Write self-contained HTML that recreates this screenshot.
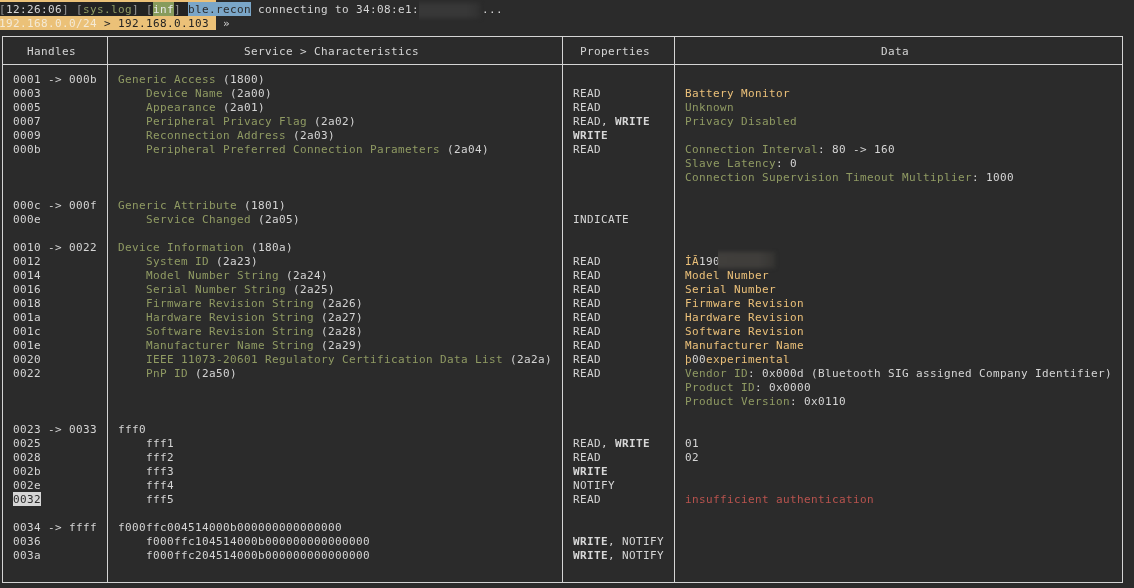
<!DOCTYPE html>
<html lang="en"><head><meta charset="utf-8"><title>bettercap ble.enum</title>
<style>
html,body{margin:0;padding:0;background:#2b2b2b;}
body{width:1134px;height:588px;overflow:hidden;position:relative;font-family:"DejaVu Sans Mono","Liberation Mono",monospace;font-size:11px;line-height:14px;color:#d5d5d5;}
span{position:absolute;white-space:pre;height:13px;padding-top:1px;display:block;letter-spacing:0.3774px;}
#t{position:absolute;left:0;top:0;width:1134px;height:588px;will-change:transform;}
i{position:absolute;display:block;background:#d4d4d4;}
.g{color:#909b63}
.y{color:#ebc079}
.b{font-weight:bold;color:#d8d8d8}
.r{color:#b9534e}
.d{color:#989898}
.sel{background:#d6d6d6;color:#2b2b2b}
.inf{background:#879b5c;color:#e8e8e8}
.mod{background:#7aa6c8;color:#2b2b2b}
.pw{background:#ebc178;color:#f4ead6}
.pk{background:#ebc178;color:#222}
.bw{position:absolute;overflow:hidden}
.bw b{position:absolute;display:block;filter:blur(2px)}
.dk{position:absolute;background:#232323}
</style></head>
<body>
<div class="dk" style="left:0;top:2px;width:188px;height:14px"></div><div style="position:absolute;left:0;top:0;width:216px;height:2px;background:#ebc178"></div><i style="left:2px;top:36px;width:1px;height:547px"></i><i style="left:107px;top:36px;width:1px;height:547px"></i><i style="left:562px;top:36px;width:1px;height:547px"></i><i style="left:674px;top:36px;width:1px;height:547px"></i><i style="left:1122px;top:36px;width:1px;height:547px"></i><i style="left:2px;top:36px;width:1121px;height:1px"></i><i style="left:2px;top:64px;width:1121px;height:1px"></i><i style="left:2px;top:582px;width:1121px;height:1px"></i><div class="bw" style="left:419px;top:0;width:70px;height:24px"><b style="left:-6px;top:3px;width:67px;height:15px;background:linear-gradient(90deg,#383838 0,#383838 80%,#313131 100%)"></b></div>
<div id="t">
<span class="d" style="left:-1px;top:2px">[</span>
<span style="left:6px;top:2px">12:26:06</span>
<span class="d" style="left:62px;top:2px">]</span>
<span class="d" style="left:76px;top:2px">[</span>
<span class="g" style="left:83px;top:2px">sys.log</span>
<span class="d" style="left:132px;top:2px">]</span>
<span class="d" style="left:146px;top:2px">[</span>
<span class="inf" style="left:153px;top:2px">inf</span>
<span class="d" style="left:174px;top:2px">]</span>
<span class="mod" style="left:188px;top:2px">ble.recon</span>
<span style="left:258px;top:2px">connecting to 34:08:e1:</span>
<span style="left:482px;top:2px">...</span>
<span class="pw" style="left:-1px;top:16px">192.168.0.0/24</span>
<span class="pk" style="left:97px;top:16px"> &gt; 192.168.0.103 </span>
<span style="left:223px;top:16px">» </span>
<span style="left:27px;top:44px">Handles</span>
<span style="left:244px;top:44px">Service &gt; Characteristics</span>
<span style="left:580px;top:44px">Properties</span>
<span style="left:881px;top:44px">Data</span>
<span style="left:13px;top:72px">0001 -&gt; 000b</span>
<span class="g" style="left:118px;top:72px">Generic Access</span>
<span style="left:223px;top:72px">(1800)</span>
<span style="left:13px;top:86px">0003</span>
<span class="g" style="left:146px;top:86px">Device Name</span>
<span style="left:230px;top:86px">(2a00)</span>
<span style="left:573px;top:86px">READ</span>
<span class="y" style="left:685px;top:86px">Battery Monitor</span>
<span style="left:13px;top:100px">0005</span>
<span class="g" style="left:146px;top:100px">Appearance</span>
<span style="left:223px;top:100px">(2a01)</span>
<span style="left:573px;top:100px">READ</span>
<span class="g" style="left:685px;top:100px">Unknown</span>
<span style="left:13px;top:114px">0007</span>
<span class="g" style="left:146px;top:114px">Peripheral Privacy Flag</span>
<span style="left:314px;top:114px">(2a02)</span>
<span style="left:573px;top:114px">READ, </span>
<span class="b" style="left:615px;top:114px">WRITE</span>
<span class="g" style="left:685px;top:114px">Privacy Disabled</span>
<span style="left:13px;top:128px">0009</span>
<span class="g" style="left:146px;top:128px">Reconnection Address</span>
<span style="left:293px;top:128px">(2a03)</span>
<span class="b" style="left:573px;top:128px">WRITE</span>
<span style="left:13px;top:142px">000b</span>
<span class="g" style="left:146px;top:142px">Peripheral Preferred Connection Parameters</span>
<span style="left:447px;top:142px">(2a04)</span>
<span style="left:573px;top:142px">READ</span>
<span class="g" style="left:685px;top:142px">Connection Interval</span>
<span style="left:818px;top:142px">: 80 -&gt; 160</span>
<span class="g" style="left:685px;top:156px">Slave Latency</span>
<span style="left:776px;top:156px">: 0</span>
<span class="g" style="left:685px;top:170px">Connection Supervision Timeout Multiplier</span>
<span style="left:972px;top:170px">: 1000</span>
<span style="left:13px;top:198px">000c -&gt; 000f</span>
<span class="g" style="left:118px;top:198px">Generic Attribute</span>
<span style="left:244px;top:198px">(1801)</span>
<span style="left:13px;top:212px">000e</span>
<span class="g" style="left:146px;top:212px">Service Changed</span>
<span style="left:258px;top:212px">(2a05)</span>
<span style="left:573px;top:212px">INDICATE</span>
<span style="left:13px;top:240px">0010 -&gt; 0022</span>
<span class="g" style="left:118px;top:240px">Device Information</span>
<span style="left:251px;top:240px">(180a)</span>
<span style="left:13px;top:254px">0012</span>
<span class="g" style="left:146px;top:254px">System ID</span>
<span style="left:216px;top:254px">(2a23)</span>
<span style="left:573px;top:254px">READ</span>
<span class="y" style="left:685px;top:254px">İĀ</span>
<span style="left:699px;top:254px">190</span>
<span style="left:13px;top:268px">0014</span>
<span class="g" style="left:146px;top:268px">Model Number String</span>
<span style="left:286px;top:268px">(2a24)</span>
<span style="left:573px;top:268px">READ</span>
<span class="y" style="left:685px;top:268px">Model Number</span>
<span style="left:13px;top:282px">0016</span>
<span class="g" style="left:146px;top:282px">Serial Number String</span>
<span style="left:293px;top:282px">(2a25)</span>
<span style="left:573px;top:282px">READ</span>
<span class="y" style="left:685px;top:282px">Serial Number</span>
<span style="left:13px;top:296px">0018</span>
<span class="g" style="left:146px;top:296px">Firmware Revision String</span>
<span style="left:321px;top:296px">(2a26)</span>
<span style="left:573px;top:296px">READ</span>
<span class="y" style="left:685px;top:296px">Firmware Revision</span>
<span style="left:13px;top:310px">001a</span>
<span class="g" style="left:146px;top:310px">Hardware Revision String</span>
<span style="left:321px;top:310px">(2a27)</span>
<span style="left:573px;top:310px">READ</span>
<span class="y" style="left:685px;top:310px">Hardware Revision</span>
<span style="left:13px;top:324px">001c</span>
<span class="g" style="left:146px;top:324px">Software Revision String</span>
<span style="left:321px;top:324px">(2a28)</span>
<span style="left:573px;top:324px">READ</span>
<span class="y" style="left:685px;top:324px">Software Revision</span>
<span style="left:13px;top:338px">001e</span>
<span class="g" style="left:146px;top:338px">Manufacturer Name String</span>
<span style="left:321px;top:338px">(2a29)</span>
<span style="left:573px;top:338px">READ</span>
<span class="y" style="left:685px;top:338px">Manufacturer Name</span>
<span style="left:13px;top:352px">0020</span>
<span class="g" style="left:146px;top:352px">IEEE 11073-20601 Regulatory Certification Data List</span>
<span style="left:510px;top:352px">(2a2a)</span>
<span style="left:573px;top:352px">READ</span>
<span class="y" style="left:685px;top:352px">þ</span>
<span style="left:692px;top:352px">00</span>
<span class="y" style="left:706px;top:352px">experimental</span>
<span style="left:13px;top:366px">0022</span>
<span class="g" style="left:146px;top:366px">PnP ID</span>
<span style="left:195px;top:366px">(2a50)</span>
<span style="left:573px;top:366px">READ</span>
<span class="g" style="left:685px;top:366px">Vendor ID</span>
<span style="left:748px;top:366px">: 0x000d (Bluetooth SIG assigned Company Identifier)</span>
<span class="g" style="left:685px;top:380px">Product ID</span>
<span style="left:755px;top:380px">: 0x0000</span>
<span class="g" style="left:685px;top:394px">Product Version</span>
<span style="left:790px;top:394px">: 0x0110</span>
<span style="left:13px;top:422px">0023 -&gt; 0033</span>
<span style="left:118px;top:422px">fff0</span>
<span style="left:13px;top:436px">0025</span>
<span style="left:146px;top:436px">fff1</span>
<span style="left:573px;top:436px">READ, </span>
<span class="b" style="left:615px;top:436px">WRITE</span>
<span style="left:685px;top:436px">01</span>
<span style="left:13px;top:450px">0028</span>
<span style="left:146px;top:450px">fff2</span>
<span style="left:573px;top:450px">READ</span>
<span style="left:685px;top:450px">02</span>
<span style="left:13px;top:464px">002b</span>
<span style="left:146px;top:464px">fff3</span>
<span class="b" style="left:573px;top:464px">WRITE</span>
<span style="left:13px;top:478px">002e</span>
<span style="left:146px;top:478px">fff4</span>
<span style="left:573px;top:478px">NOTIFY</span>
<span class="sel" style="left:13px;top:492px">0032</span>
<span style="left:146px;top:492px">fff5</span>
<span style="left:573px;top:492px">READ</span>
<span class="r" style="left:685px;top:492px">insufficient authentication</span>
<span style="left:13px;top:520px">0034 -&gt; ffff</span>
<span style="left:118px;top:520px">f000ffc004514000b000000000000000</span>
<span style="left:13px;top:534px">0036</span>
<span style="left:146px;top:534px">f000ffc104514000b000000000000000</span>
<span class="b" style="left:573px;top:534px">WRITE</span>
<span style="left:608px;top:534px">, NOTIFY</span>
<span style="left:13px;top:548px">003a</span>
<span style="left:146px;top:548px">f000ffc204514000b000000000000000</span>
<span class="b" style="left:573px;top:548px">WRITE</span>
<span style="left:608px;top:548px">, NOTIFY</span>
</div>
<div class="bw" style="left:718px;top:248px;width:70px;height:26px;opacity:.9"><b style="left:-6px;top:4px;width:63px;height:16px;background:linear-gradient(90deg,#44423f 0,#43413e 75%,#373634 100%)"></b></div>
</body></html>
